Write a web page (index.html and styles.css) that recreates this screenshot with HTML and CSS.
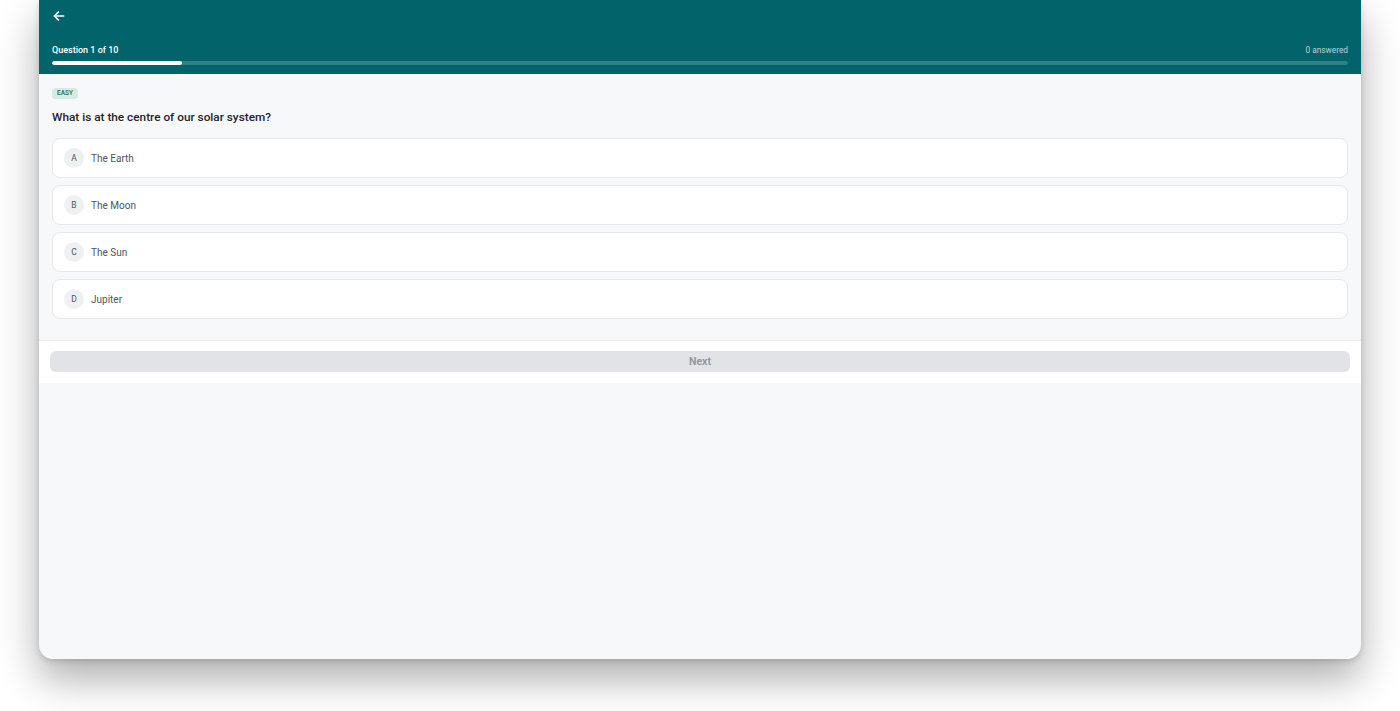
FILE: index.html
```html
<!DOCTYPE html>
<html lang="en">
<head>
<meta charset="utf-8">
<title>Quiz</title>
<link rel="stylesheet" href="styles.css">
</head>
<body>
<div class="page">
<div class="frame">
  <header class="header">
    <div class="topbar">
      <button class="back" aria-label="Back">
        <svg width="14" height="14" viewBox="0 0 24 24" fill="none" stroke="#ffffff" stroke-width="2.6" stroke-linecap="round" stroke-linejoin="round"><path d="M20 12H4"/><path d="M11 5l-7 7 7 7"/></svg>
      </button>
    </div>
    <div class="meta">
      <span class="count">Question 1 of 10</span>
      <span class="answered">0 answered</span>
    </div>
    <div class="track"><div class="fill" style="width:10%"></div></div>
  </header>
  <main class="content">
    <span class="badge">EASY</span>
    <h1 class="question">What is at the centre of our solar system?</h1>
    <div class="options">
      <div class="option"><span class="letter">A</span><span class="label">The Earth</span></div>
      <div class="option"><span class="letter">B</span><span class="label">The Moon</span></div>
      <div class="option"><span class="letter">C</span><span class="label">The Sun</span></div>
      <div class="option"><span class="letter">D</span><span class="label">Jupiter</span></div>
    </div>
  </main>
  <footer class="footer">
    <button class="next" disabled>Next</button>
  </footer>
</div>
</div>
</body>
</html>
```

FILE: styles.css
```css
* { box-sizing: border-box; }
html, body { margin: 0; padding: 0; background: #ffffff; }
body { font-family: Roboto, "Liberation Sans", Arial, sans-serif; }

.page {
  height: 711px;
  padding: 0 39px;
  overflow: hidden;
}

.frame {
  width: 1322px;
  height: 659px;
  background: #f7f8f9;
  border-radius: 0 0 14px 14px;
  box-shadow: 0 20px 40px rgba(0,0,0,0.32), 0 2px 6px rgba(0,0,0,0.14);
  overflow: hidden;
  display: flex;
  flex-direction: column;
}

.header {
  background: #03636a;
  padding: 0 13px 9px 13px;
  display: flex;
  flex-direction: column;
}
.topbar { height: 32px; display: flex; align-items: center; }
.back {
  border: 0; background: transparent; padding: 0; margin: 0;
  width: 14px; height: 14px; display: flex; cursor: pointer;
}
.meta {
  margin-top: 12px;
  display: flex;
  justify-content: space-between;
  align-items: center;
  height: 12px;
  line-height: 12px;
}
.count { color: #ffffff; font-weight: 500; font-size: 9px; }
.answered { color: #b9d6d8; font-size: 8.3px; }
.track {
  margin-top: 5px;
  height: 4px;
  border-radius: 2px;
  background: #2f8086;
  overflow: hidden;
}
.fill { height: 100%; background: #ffffff; border-radius: 2px; }

.content {
  padding: 14px 13px 21px 13px;
  display: flex;
  flex-direction: column;
  align-items: flex-start;
}
.badge {
  display: inline-block;
  height: 11px;
  line-height: 11px;
  padding: 0 5px;
  border-radius: 4px;
  background: #d5ebe3;
  color: #1e6b4e;
  font-size: 6.5px;
  font-weight: 500;
}
.question {
  margin: 9px 0 0 0;
  font-size: 11.8px;
  line-height: 18px;
  font-weight: 500;
  color: #1f2428;
}
.options {
  margin-top: 12px;
  width: 100%;
  display: flex;
  flex-direction: column;
  gap: 7px;
}
.option {
  height: 40px;
  background: #ffffff;
  border: 1px solid #e6e8eb;
  border-radius: 8px;
  display: flex;
  align-items: center;
  padding: 0 11px;
  gap: 7px;
}
.letter {
  width: 20px; height: 20px;
  border-radius: 50%;
  background: #eff0f2;
  color: #4b5563;
  font-size: 8.5px;
  font-weight: 400;
  display: flex; align-items: center; justify-content: center;
}
.label { font-size: 10px; color: #4b5563; }

.footer {
  background: #ffffff;
  border-top: 1px solid #e7e9ec;
  padding: 10px 11px 11px 11px;
}
.next {
  width: 100%;
  height: 21px;
  border: 0;
  border-radius: 6px;
  background: #e2e3e6;
  color: #8f949c;
  font-family: inherit;
  font-size: 10.5px;
  font-weight: 600;
  display: block;
}
```
